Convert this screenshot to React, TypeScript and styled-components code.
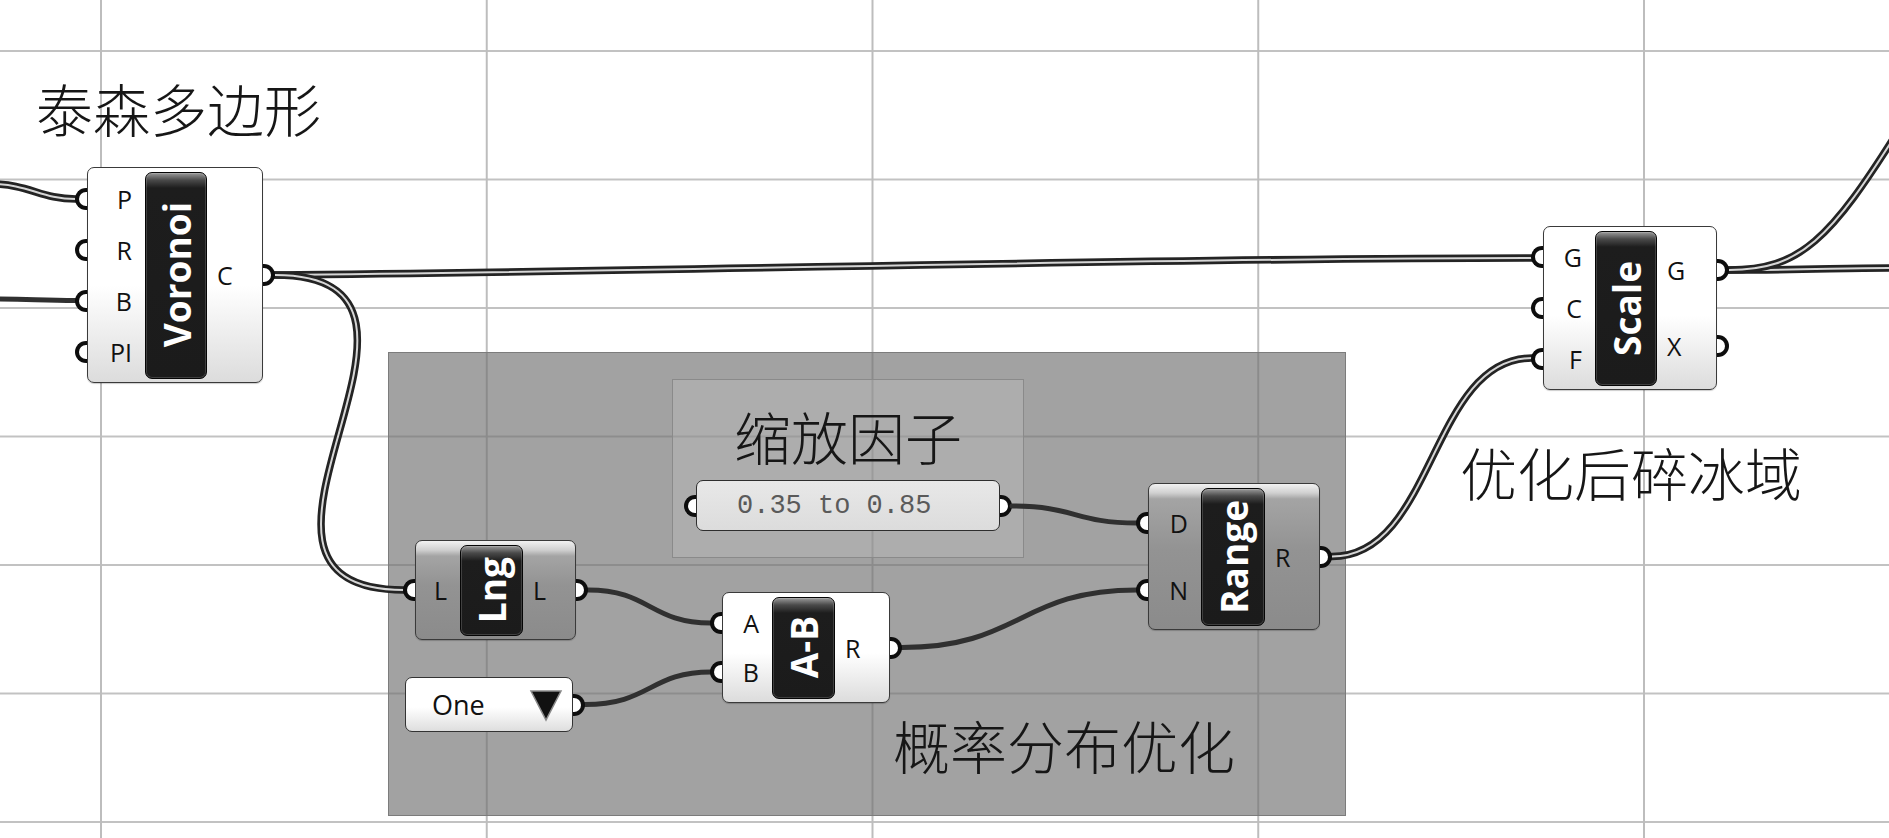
import styled, { createGlobalStyle } from "styled-components";

const GlobalStyle = createGlobalStyle`
  html, body {
    margin: 0;
    padding: 0;
    background: #fff;
  }
  body {
    width: 1889px;
    height: 838px;
    overflow: hidden;
  }
`;

const Canvas = styled.div`
  position: relative;
  width: 1889px;
  height: 838px;
  overflow: hidden;
  background-color: #fff;
  background-image: linear-gradient(to right, #bdbdbd 0 1.5px, transparent 1.5px),
    linear-gradient(to bottom, #c2c2c2 0 1.5px, transparent 1.5px);
  background-size: 385.75px 100%, 100% 128.5px;
  background-position: 100px 0, 0 50px;
  font-family: "Open Sans", "Liberation Sans", sans-serif;
`;

const Group = styled.div<{ $x: number; $y: number; $w: number; $h: number; $inner?: boolean }>`
  position: absolute;
  left: ${({ $x }) => $x}px;
  top: ${({ $y }) => $y}px;
  width: ${({ $w }) => $w}px;
  height: ${({ $h }) => $h}px;
  box-sizing: border-box;
  background: ${({ $inner }) => ($inner ? "rgba(215, 215, 215, 0.22)" : "rgba(112, 112, 112, 0.65)")};
  border: 1.5px solid ${({ $inner }) => ($inner ? "#8a8a8a" : "#7c7c7c")};
  display: flex;
  flex-direction: column;
  align-items: center;
  padding-top: 27px;
  row-gap: 16px;
`;

const Note = styled.div<{ $x?: number; $y?: number }>`
  position: ${({ $x }) => ($x === undefined ? "static" : "absolute")};
  left: ${({ $x }) => $x ?? 0}px;
  top: ${({ $y }) => $y ?? 0}px;
  font-family: "Noto Sans CJK SC", "Liberation Serif", serif;
  font-weight: 300;
  font-size: 57px;
  line-height: 1;
  color: #161616;
  white-space: nowrap;
`;

const Box = styled.div<{ $x: number; $y: number; $w: number; $h: number; $gray?: boolean }>`
  position: absolute;
  left: ${({ $x }) => $x}px;
  top: ${({ $y }) => $y}px;
  width: ${({ $w }) => $w}px;
  height: ${({ $h }) => $h}px;
  box-sizing: border-box;
  display: flex;
  border: 1.5px solid #3a3a3a;
  border-radius: 7px;
  background: ${({ $gray }) =>
    $gray
      ? "linear-gradient(#f2f2f2 0, #d0d0d0 9px, #a4a4a4 15px, #939393 45%, #8b8b8b 100%)"
      : "linear-gradient(#ffffff 0, #ffffff 55%, #dcdcdc 100%)"};
  box-shadow: 0 1px 1px rgba(0, 0, 0, 0.2);
`;

const ParamCol = styled.div<{ $w?: number }>`
  ${({ $w }) => ($w ? `width: ${$w}px; flex: none;` : "flex: 1;")}
  display: flex;
  flex-direction: column;
  padding: 5px 0;
  box-sizing: border-box;
`;

const Param = styled.div<{ $side: "in" | "out" }>`
  flex: 1;
  position: relative;
  display: flex;
  align-items: center;
  justify-content: ${({ $side }) => ($side === "in" ? "flex-end" : "flex-start")};
  padding: ${({ $side }) => ($side === "in" ? "0 13px 0 0" : "0 0 0 10px")};
  font-size: 25px;
  color: #111;
`;

// grasshopper param grip: a half ring sticking out of the box edge
const Port = styled.span<{ $side: "in" | "out" }>`
  position: absolute;
  top: 50%;
  width: 12px;
  height: 22px;
  margin-top: -11px;
  box-sizing: border-box;
  background: #fff;
  border: 4px solid #0d0d0d;
  ${({ $side }) =>
    $side === "in"
      ? "left: -13px; border-right: none; border-radius: 11px 0 0 11px;"
      : "right: -13px; border-left: none; border-radius: 0 11px 11px 0;"}
`;

const Nick = styled.div<{ $w: number }>`
  width: ${({ $w }) => $w}px;
  flex: none;
  margin: 3.5px 0;
  box-sizing: border-box;
  border: 1.5px solid #050505;
  border-radius: 7px;
  background: linear-gradient(#9a9a9a 0, #4a4a4a 7px, #1d1d1d 15px, #1b1b1b 100%);
  box-shadow: inset 0 0 0 1px rgba(255, 255, 255, 0.16);
  display: flex;
  align-items: center;
  justify-content: center;
`;

const NickText = styled.span`
  writing-mode: vertical-rl;
  transform: rotate(180deg);
  color: #fff;
  font-weight: 700;
  font-size: 37px;
  line-height: 1;
  white-space: nowrap;
`;

const Slider = styled.div`
  position: relative;
  width: 304px;
  height: 51px;
  box-sizing: border-box;
  border: 1.5px solid #2e2e2e;
  border-radius: 7px;
  background: linear-gradient(#e8e8e8, #dcdcdc);
  display: flex;
  align-items: center;
  padding-left: 40px;
  font-family: "Liberation Mono", "Courier New", monospace;
  font-size: 27px;
  color: #5a5a5a;
`;

const ValueList = styled.div<{ $x: number; $y: number }>`
  position: absolute;
  left: ${({ $x }) => $x}px;
  top: ${({ $y }) => $y}px;
  width: 168px;
  height: 55px;
  box-sizing: border-box;
  border: 1.5px solid #333;
  border-radius: 7px;
  background: linear-gradient(#ffffff 0, #ffffff 55%, #dedede 100%);
  display: flex;
  align-items: center;
  justify-content: space-between;
  padding: 0 9px 0 26px;
  font-size: 27px;
  color: #111;
`;

const WireLayer = styled.svg`
  position: absolute;
  left: 0;
  top: 0;
  width: 1889px;
  height: 838px;
  overflow: visible;
  pointer-events: none;
`;

type NodeProps = {
  x: number;
  y: number;
  w: number;
  h: number;
  inW: number;
  labelW: number;
  name: string;
  inputs: string[];
  outputs: string[];
  gray?: boolean;
};

const Node = ({ x, y, w, h, inW, labelW, name, inputs, outputs, gray }: NodeProps) => (
  <Box $x={x} $y={y} $w={w} $h={h} $gray={gray}>
    <ParamCol $w={inW}>
      {inputs.map((p, i) => (
        <Param key={i} $side="in">
          <Port $side="in" />
          {p}
        </Param>
      ))}
    </ParamCol>
    <Nick $w={labelW}>
      <NickText>{name}</NickText>
    </Nick>
    <ParamCol>
      {outputs.map((p, i) => (
        <Param key={i} $side="out">
          {p}
          <Port $side="out" />
        </Param>
      ))}
    </ParamCol>
  </Box>
);

const Wire = ({ d, list }: { d: string; list?: boolean }) =>
  list ? (
    <g fill="none" strokeLinecap="round">
      <path d={d} stroke="#242424" strokeWidth={7.5} />
      <path d={d} stroke="#d6d6d6" strokeWidth={2} />
    </g>
  ) : (
    <path d={d} fill="none" stroke="#303030" strokeWidth={5} strokeLinecap="round" />
  );

const wires: { d: string; list?: boolean }[] = [
  { d: "M -10 184 C 30 184, 40 199, 76 199", list: true },
  { d: "M -10 299 C 30 299, 40 300.5, 76 300.5" },
  { d: "M 275 275 C 700 271, 1150 258, 1532 258", list: true },
  { d: "M 275 275 C 492 275, 186 590, 404 590", list: true },
  { d: "M 588 590 C 650 590, 650 623, 711 623" },
  { d: "M 585 704.5 C 650 704.5, 650 672, 711 672" },
  { d: "M 902 647.5 C 1020 647.5, 1020 590, 1137 590" },
  { d: "M 1012 506 C 1075 506, 1075 523, 1137 523" },
  { d: "M 1332 556.5 C 1435 556.5, 1430 358, 1532 358", list: true },
  { d: "M 1729 270 C 1800 270, 1850 268, 1900 268", list: true },
  { d: "M 1729 270 C 1800 270, 1830 240, 1900 128", list: true },
];

export default function App() {
  return (
    <>
      <GlobalStyle />
      <Canvas>
        <Group $x={388} $y={352} $w={958} $h={464} />
        <Group $x={672} $y={379} $w={352} $h={179} $inner>
          <Note>缩放因子</Note>
          <Slider>
            <Port $side="in" />
            0.35 to 0.85
            <Port $side="out" />
          </Slider>
        </Group>

        <Note $x={36} $y={79}>泰森多边形</Note>
        <Note $x={1460} $y={443}>优化后碎冰域</Note>
        <Note $x={893} $y={716}>概率分布优化</Note>

        <WireLayer viewBox="0 0 1889 838">
          {wires.map((w, i) => (
            <Wire key={i} d={w.d} list={w.list} />
          ))}
        </WireLayer>

        <Node x={87} y={167} w={176} h={216} inW={57} labelW={62} name="Voronoi" inputs={["P", "R", "B", "PI"]} outputs={["C"]} />
        <Node x={1543} y={226} w={174} h={164} inW={51} labelW={62} name="Scale" inputs={["G", "C", "F"]} outputs={["G", "X"]} />
        <Node x={415} y={540} w={161} h={100} inW={44} labelW={63} name="Lng" inputs={["L"]} outputs={["L"]} gray />
        <Node x={722} y={592} w={168} h={111} inW={49} labelW={63} name="A-B" inputs={["A", "B"]} outputs={["R"]} />
        <Node x={1148} y={483} w={172} h={147} inW={52} labelW={64} name="Range" inputs={["D", "N"]} outputs={["R"]} gray />

        <ValueList $x={405} $y={677}>
          One
          <svg width="34" height="34" viewBox="0 0 34 34">
            <polygon points="2,3 32,3 17,32" fill="#111" stroke="#8a8a8a" strokeWidth="1.5" />
          </svg>
          <Port $side="out" />
        </ValueList>
      </Canvas>
    </>
  );
}
